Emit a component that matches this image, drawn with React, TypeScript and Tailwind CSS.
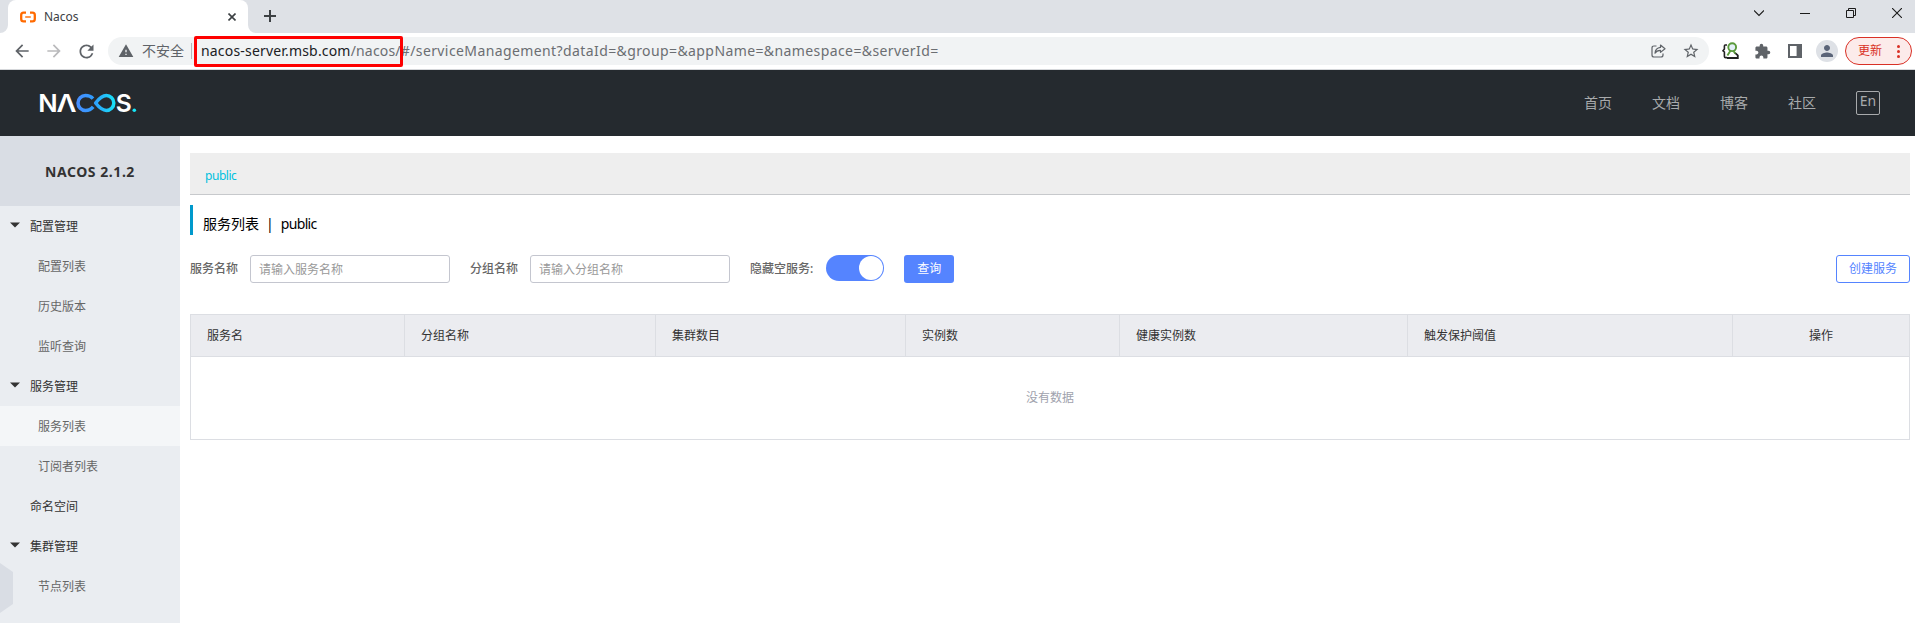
import React from "react";
import {
  MdArrowBack,
  MdArrowForward,
  MdRefresh,
  MdWarning,
  MdStarBorder,
  MdExtension,
  MdPerson,
} from "react-icons/md";

function NacosLogo() {
  return (
    <svg width="104" height="46" viewBox="-4 -13 104 46" className="block">
      <defs>
        <linearGradient id="loop" gradientUnits="userSpaceOnUse" x1="36" y1="0" x2="76" y2="0">
          <stop offset="0" stopColor="#4a8dff" />
          <stop offset="0.45" stopColor="#2f9dfd" />
          <stop offset="1" stopColor="#16e6f7" />
        </linearGradient>
      </defs>
      <g fill="#fff" fontFamily="Inter, sans-serif" fontWeight="600" fontSize="24.5">
        <text x="-1.8" y="18.9" textLength="19.4" lengthAdjust="spacingAndGlyphs">N</text>
        <text x="16.4" y="18.9" textLength="20" lengthAdjust="spacingAndGlyphs">Λ</text>
        <text x="75.8" y="18.9" textLength="16" lengthAdjust="spacingAndGlyphs">S</text>
      </g>
      <path
        d="M53 5.6C51.2 3.6 48.6 2.6 45.4 2.6A7.4 7.4 0 0 0 45.4 17.4C48.8 17.4 51.4 16 53.2 13.8M55.6 10C59.2 5.4 62.4 2.6 66.4 2.6A7.4 7.4 0 0 1 66.4 17.4C62.4 17.4 59.2 14.6 55.6 10Z"
        fill="none"
        stroke="url(#loop)"
        strokeWidth="3.5"
        strokeLinejoin="round"
      />
      <circle cx="94.3" cy="17.2" r="1.8" fill="#16e6f7" />
    </svg>
  );
}

function TabStrip() {
  return (
    <div className="flex h-[33px] items-stretch bg-[#dee1e6]">
      <svg width="8" height="33" viewBox="0 0 8 33" className="shrink-0">
        <path d="M8 25V33H0A8 8 0 0 0 8 25Z" fill="#fff" />
      </svg>
      <div className="flex w-[240px] items-center rounded-t-lg bg-white pl-3">
        <svg width="16" height="16" viewBox="0 0 16 16" fill="none" stroke="#ff6a00" strokeWidth="2.3">
          <path d="M6 3.6H3.6Q1.2 3.6 1.2 6V10Q1.2 12.4 3.6 12.4H6M10 3.6H12.4Q14.8 3.6 14.8 6V10Q14.8 12.4 12.4 12.4H10" />
          <path d="M5.2 8H10.8" strokeWidth="1.4" />
        </svg>
        <span className="ml-2 text-[12px] leading-4 text-[#3c4043]">Nacos</span>
        <svg width="8" height="8" viewBox="0 0 8 8" className="mr-3 ml-auto" stroke="#3c4043" strokeWidth="1.6">
          <path d="M.5.5l7 7M7.5.5l-7 7" />
        </svg>
      </div>
      <svg width="8" height="33" viewBox="0 0 8 33" className="shrink-0">
        <path d="M0 25V33H8A8 8 0 0 1 0 25Z" fill="#fff" />
      </svg>
      <svg width="12" height="12" viewBox="0 0 12 12" className="mt-[10px] ml-2" stroke="#3c4043" strokeWidth="2">
        <path d="M6 0V12M0 6H12" />
      </svg>
      <div className="mt-2 mr-[13px] ml-auto flex h-[10px] items-center gap-9 text-[#1b1b1b]">
        <svg width="10" height="10" viewBox="0 0 10 10" fill="none" stroke="currentColor" strokeWidth="1.1">
          <path d="M0 2.5L5 7.5L10 2.5" />
        </svg>
        <svg width="10" height="10" viewBox="0 0 10 10" fill="none" stroke="currentColor">
          <path d="M0 5.5H10" />
        </svg>
        <svg width="10" height="10" viewBox="0 0 10 10" fill="none" stroke="currentColor">
          <path d="M.5 2.5H7.5V9.5H.5ZM2.5 2.5V.5H9.5V7.5H7.5" />
        </svg>
        <svg width="10" height="10" viewBox="0 0 10 10" fill="none" stroke="currentColor" strokeWidth="1.1">
          <path d="M0 0L10 10M10 0L0 10" />
        </svg>
      </div>
    </div>
  );
}

function Toolbar() {
  return (
    <div className="relative flex h-[37px] items-center border-b border-[#d5d7da] bg-white pr-[3px] pl-3 text-[#5f6368]">
      <MdArrowBack size={20} />
      <MdArrowForward size={20} className="ml-3 text-[#bababc]" />
      <MdRefresh size={21} className="ml-3" />
      <div className="ml-[11px] flex h-7 w-[1601px] items-center rounded-full bg-[#f1f3f4] pl-[10px]">
        <MdWarning size={16} />
        <span className="ml-2 text-[14px] leading-5">不安全</span>
        <span className="ml-[7px] h-4 w-px bg-[#b4b7ba]" />
        <span className="ml-[9px] text-[14px] leading-5 tracking-[0.18px] whitespace-nowrap text-[#6b6e72]">
          <span className="text-[#202124]">nacos-server.msb.com</span>
          /nacos/
          <span className="tracking-[0.4px]">
            #/serviceManagement?dataId=&amp;group=&amp;appName=&amp;namespace=&amp;serverId=
          </span>
        </span>
        <svg width="15" height="14" viewBox="0 0 15 14" className="mr-4 ml-auto" fill="none" stroke="#5f6368" strokeWidth="1.2" strokeLinejoin="round">
          <path d="M5.5 2H3Q1 2 1 4V11Q1 13 3 13H10Q12 13 12 11V9.5" />
          <path d="M9.5 1L14 4.8L9.5 8.4V6.3Q5.8 6.2 4 9.2Q4.4 4 9.5 3.4Z" />
        </svg>
        <MdStarBorder size={18} className="mr-[9px]" />
      </div>
      <svg width="18" height="18" viewBox="0 0 18 18" className="ml-[13px]" fill="none">
        <path d="M5 3H3.2Q2.4 3 2.4 4V7L1 8.8L2.4 10V14.5Q2.4 15.6 3.6 15.6H5" stroke="#222" strokeWidth="1.6" />
        <path d="M5 16H15.8V13.4L13 10.8" stroke="#222" strokeWidth="1.8" />
        <circle cx="10.2" cy="5.2" r="3.9" stroke="#5b9a3c" strokeWidth="1.9" fill="#e4eff9" />
        <path d="M8.6 8.6L5.4 13.6M11.4 9L13.4 11.6" stroke="#5b9a3c" strokeWidth="1.9" />
      </svg>
      <MdExtension size={17} className="ml-[14px]" />
      <svg width="14" height="14" viewBox="0 0 14 14" className="ml-[17px]">
        <path d="M0 0H14V14H0ZM2 2V12H8.6V2Z" fill="#5f6368" fillRule="evenodd" />
      </svg>
      <span className="ml-[14px] flex size-[22px] items-center justify-center rounded-full bg-[#dee1e6] text-[#5a6478]">
        <MdPerson size={18} />
      </span>
      <div className="ml-[7px] flex h-7 w-[67px] shrink-0 items-center rounded-full border border-[#d93025] bg-[#fcebea] pl-3 text-[#d93025]">
        <span className="text-[12px] leading-4">更新</span>
        <span className="ml-[15px] flex flex-col gap-[2px]">
          <i className="size-[3px] rounded-full bg-[#d93025]" />
          <i className="size-[3px] rounded-full bg-[#d93025]" />
          <i className="size-[3px] rounded-full bg-[#d93025]" />
        </span>
      </div>
      <div className="absolute top-[3px] left-[194px] h-[31px] w-[209px] rounded-[2px] border-[3px] border-[#fe0000]" />
    </div>
  );
}

function SiteHeader() {
  return (
    <header className="flex h-[66px] items-center bg-[#252a2f] pr-[35px] pl-9 text-[#a8aaac]">
      <NacosLogo />
      <nav className="ml-auto flex items-center gap-10 text-[14px] leading-5">
        <span>首页</span>
        <span>文档</span>
        <span>博客</span>
        <span>社区</span>
        <span className="flex size-6 items-center justify-center rounded-[2px] border border-[#a8aaac] pb-1">En</span>
      </nav>
    </header>
  );
}

type Item = { label: string; kind: "group" | "child" | "root"; active?: boolean };

const menu: Item[] = [
  { label: "配置管理", kind: "group" },
  { label: "配置列表", kind: "child" },
  { label: "历史版本", kind: "child" },
  { label: "监听查询", kind: "child" },
  { label: "服务管理", kind: "group" },
  { label: "服务列表", kind: "child", active: true },
  { label: "订阅者列表", kind: "child" },
  { label: "命名空间", kind: "root" },
  { label: "集群管理", kind: "group" },
  { label: "节点列表", kind: "child" },
];

const rowStyle = {
  group: "pl-[10px] text-[#333]",
  child: "pl-[38px] text-[#666]",
  root: "pl-[30px] text-[#333]",
};

function Sidebar() {
  return (
    <aside className="relative w-[180px] shrink-0 bg-[#eaedf1]">
      <h1 className="flex h-[70px] items-center justify-center bg-[#d9dde4] text-[14px] font-bold tracking-[0.55px] text-[#333]">
        NACOS 2.1.2
      </h1>
      <ul className="text-[12px]">
        {menu.map((m) => (
          <li
            key={m.label}
            className={`flex h-10 items-center pt-px ${rowStyle[m.kind]} ${m.active ? "bg-[#f4f6f8]" : ""}`}
          >
            {m.kind === "group" && (
              <svg width="10" height="6" viewBox="0 0 10 6" className="mr-[10px] mb-1">
                <path d="M0 .5H10L5 5.5Z" fill="#333" />
              </svg>
            )}
            {m.label}
          </li>
        ))}
      </ul>
      <svg width="13" height="50" viewBox="0 0 13 50" className="absolute top-[427px] left-0">
        <path d="M0 0L13 9V41L0 50Z" fill="#d9dde4" />
      </svg>
    </aside>
  );
}

function Field({ label, hint }: { label: string; hint: string }) {
  return (
    <label className="mr-5 flex items-center font-medium text-[#666]">
      {label}
      <input
        placeholder={hint}
        className="ml-3 h-7 w-[200px] rounded-[3px] border border-[#c4c6cf] px-2 font-normal placeholder:text-[#999]"
      />
    </label>
  );
}

function ServiceTable() {
  const cell = "border-r border-[#dcdee3] pl-4 text-left font-normal";
  return (
    <table className="mt-[31px] w-full table-fixed border-collapse border border-[#dcdee3] text-[#333]">
      <colgroup>
        <col className="w-[214px]" />
        <col className="w-[251px]" />
        <col className="w-[250px]" />
        <col className="w-[214px]" />
        <col className="w-[288px]" />
        <col className="w-[325px]" />
        <col />
      </colgroup>
      <thead>
        <tr className="h-[42px] border-b border-[#dcdee3] bg-[#ebecf0]">
          <th className={cell}>服务名</th>
          <th className={cell}>分组名称</th>
          <th className={cell}>集群数目</th>
          <th className={cell}>实例数</th>
          <th className={cell}>健康实例数</th>
          <th className={cell}>触发保护阈值</th>
          <th className="text-center font-normal">操作</th>
        </tr>
      </thead>
      <tbody>
        <tr className="h-[83px]">
          <td colSpan={7} className="text-center text-[#a0a2ad]">没有数据</td>
        </tr>
      </tbody>
    </table>
  );
}

export default function App() {
  return (
    <div className="flex h-[623px] w-full flex-col overflow-hidden bg-white font-['Noto_Sans','Noto_Sans_CJK_SC',sans-serif]">
      <TabStrip />
      <Toolbar />
      <SiteHeader />
      <div className="flex min-h-0 flex-1">
        <Sidebar />
        <main className="min-w-0 flex-1 pt-[17px] pr-[5px] pl-[10px] text-[12px] leading-[18px]">
          <div className="flex h-[42px] items-center border-b border-[#c7c9cc] bg-[#eee] pt-1 pl-[15px] tracking-[-0.45px] text-[#00c1de]">
            public
          </div>
          <h2 className="mt-[10px] flex h-[30px] items-center border-l-[3px] border-[#0099cc] pt-[7px] pl-[10px] text-[14px] text-black">
            <span>服务列表</span>
            <span className="mx-[7px]">|</span>
            <span className="tracking-[-0.65px]">public</span>
          </h2>
          <div className="mt-5 flex h-7 items-center">
            <Field label="服务名称" hint="请输入服务名称" />
            <Field label="分组名称" hint="请输入分组名称" />
            <span className="font-medium text-[#666]">隐藏空服务:</span>
            <span className="mb-[2px] ml-[13px] flex h-[26px] w-[58px] items-center justify-end rounded-full bg-[#5584ff] p-px">
              <span className="size-6 rounded-full bg-white" />
            </span>
            <button className="ml-5 h-7 w-[50px] rounded-[3px] bg-[#5584ff] text-white">查询</button>
            <button className="ml-auto h-7 w-[74px] rounded-[3px] border border-[#5584ff] text-[#5584ff]">创建服务</button>
          </div>
          <ServiceTable />
        </main>
      </div>
    </div>
  );
}
